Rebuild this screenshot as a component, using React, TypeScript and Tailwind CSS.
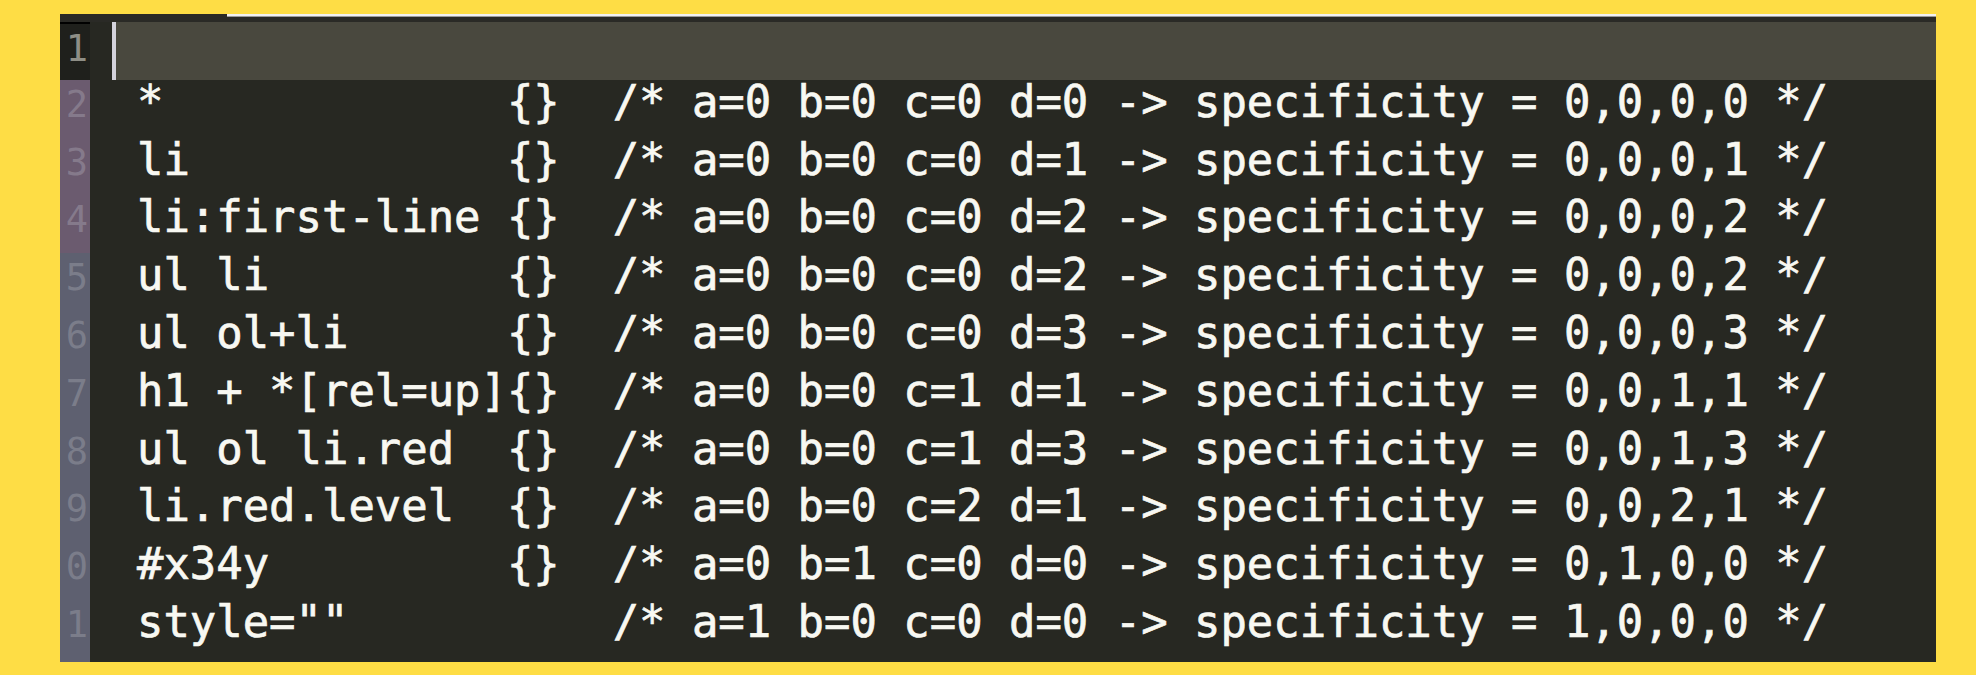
import React from 'react';

type Line = { num: number; selector: string; braces: boolean; comment: string; tone: 'plain' | 'purple' | 'slate' };

const lines: Line[] = [
  { num: 2, selector: '*', braces: true, comment: '/* a=0 b=0 c=0 d=0 -> specificity = 0,0,0,0 */', tone: 'purple' },
  { num: 3, selector: 'li', braces: true, comment: '/* a=0 b=0 c=0 d=1 -> specificity = 0,0,0,1 */', tone: 'purple' },
  { num: 4, selector: 'li:first-line', braces: true, comment: '/* a=0 b=0 c=0 d=2 -> specificity = 0,0,0,2 */', tone: 'purple' },
  { num: 5, selector: 'ul li', braces: true, comment: '/* a=0 b=0 c=0 d=2 -> specificity = 0,0,0,2 */', tone: 'slate' },
  { num: 6, selector: 'ul ol+li', braces: true, comment: '/* a=0 b=0 c=0 d=3 -> specificity = 0,0,0,3 */', tone: 'slate' },
  { num: 7, selector: 'h1 + *[rel=up]', braces: true, comment: '/* a=0 b=0 c=1 d=1 -> specificity = 0,0,1,1 */', tone: 'slate' },
  { num: 8, selector: 'ul ol li.red', braces: true, comment: '/* a=0 b=0 c=1 d=3 -> specificity = 0,0,1,3 */', tone: 'slate' },
  { num: 9, selector: 'li.red.level', braces: true, comment: '/* a=0 b=0 c=2 d=1 -> specificity = 0,0,2,1 */', tone: 'slate' },
  { num: 10, selector: '#x34y', braces: true, comment: '/* a=0 b=1 c=0 d=0 -> specificity = 0,1,0,0 */', tone: 'slate' },
  { num: 11, selector: 'style=""', braces: false, comment: '/* a=1 b=0 c=0 d=0 -> specificity = 1,0,0,0 */', tone: 'slate' },
];

const gutterTone = {
  plain: 'bg-[#1f201c] text-[#8e8e86]',
  purple: 'bg-[#6b5b6f] text-[#857a8b]',
  slate: 'bg-[#5e6070] text-[#7b7d8a]',
};

// the gutter is cropped on the left, only the last digit shows
const Gutter = ({ num, tone, first }: { num: number; tone: Line['tone']; first?: boolean }) => (
  <div
    className={`w-[30px] shrink-0 flex justify-end pr-[2px] font-['DejaVu_Sans_Mono',monospace] text-[37px] leading-[49px] ${gutterTone[tone]} ${first ? 'border-t-2 border-black' : ''}`}
  >
    <span>{num % 10}</span>
  </div>
);

export default function App() {
  return (
    <div className="w-[1976px] h-[675px] bg-[#fedd45] pt-[14px] pl-[60px] overflow-hidden">
      <div className="w-[1876px] h-[648px] bg-[#272822] flex flex-col overflow-hidden">
        <div className="h-[8px] flex shrink-0 bg-[#2a2a26]">
          <div className="w-[167px]" />
          <div className="flex-1 h-[3px] border-t-2 border-[#f2f2f2] border-b border-b-[#9c9c9c]" />
        </div>

        <div className="flex h-[57.8px] shrink-0">
          <Gutter num={1} tone="plain" first />
          <div className="w-[22px] shrink-0" />
          <div className="relative flex-1 bg-[#49483e]">
            <div className="absolute left-0 top-0 h-full w-[4px] bg-[#d4d3dc]" />
          </div>
        </div>

        {lines.map((l) => (
          <div key={l.num} className="flex h-[57.8px] shrink-0">
            <Gutter num={l.num} tone={l.tone} />
            <div className="w-[22px] shrink-0" />
            <div className="flex-1 pl-[25px] whitespace-pre text-[#f8f8f2] font-['DejaVu_Sans_Mono',monospace] text-[43.9px] leading-[43px] [-webkit-text-stroke:0.7px_#f8f8f2]">
              {l.selector.padEnd(14, ' ') + (l.braces ? '{}' : '  ') + '  ' + l.comment}
            </div>
          </div>
        ))}

        <div className="flex flex-1">
          <div className="w-[30px] bg-[#5e6070]" />
        </div>
      </div>
    </div>
  );
}
